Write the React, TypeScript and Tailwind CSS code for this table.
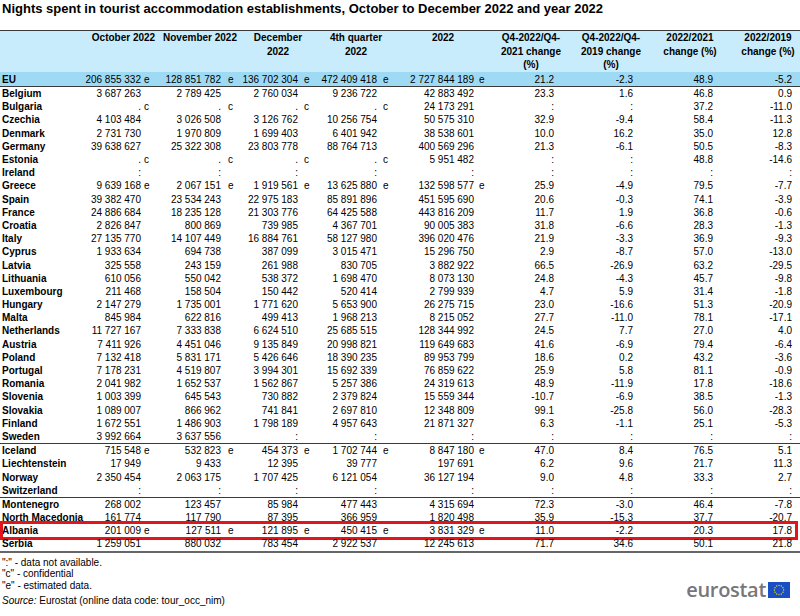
import React from 'react';

type RowData = { name: string; values: string[] };

const GRID =
  'grid grid-cols-[85px_56px_21px_59px_17px_60px_20px_59px_17px_80px_18px_62px_16px_63px_19px_61px_23px_56px_8px] items-center';

const flagPad = ['pl-[3px]', 'pl-[7px]', 'pl-[6px]', 'pl-[6px]', 'pl-[5px]', '', '', '', ''];

const headers = [
  'October 2022',
  'November 2022',
  'December 2022',
  '4th quarter 2022',
  '2022',
  'Q4-2022/Q4-2021 change (%)',
  'Q4-2022/Q4-2019 change (%)',
  '2022/2021 change (%)',
  '2022/2019 change (%)',
];

const headerWidth = [
  'w-[70px]',
  'w-[76px]',
  'w-[60px]',
  'w-[64px]',
  'w-[80px]',
  'w-[70px]',
  'w-[72px]',
  'w-[64px]',
  'w-[64px]',
];

const na = Array(9).fill(':');
const cc = ['. c', '. c', '. c', '. c'];

const eu: RowData = {
  name: 'EU',
  values: ['206 855 332 e', '128 851 782 e', '136 702 304 e', '472 409 418 e', '2 727 844 189 e', '21.2', '-2.3', '48.9', '-5.2'],
};

const members: RowData[] = [
  { name: 'Belgium', values: ['3 687 263', '2 789 425', '2 760 034', '9 236 722', '42 883 492', '23.3', '1.6', '46.8', '0.9'] },
  { name: 'Bulgaria', values: [...cc, '24 173 291', ':', ':', '37.2', '-11.0'] },
  { name: 'Czechia', values: ['4 103 484', '3 026 508', '3 126 762', '10 256 754', '50 575 310', '32.9', '-9.4', '58.4', '-11.3'] },
  { name: 'Denmark', values: ['2 731 730', '1 970 809', '1 699 403', '6 401 942', '38 538 601', '10.0', '16.2', '35.0', '12.8'] },
  { name: 'Germany', values: ['39 638 627', '25 322 308', '23 803 778', '88 764 713', '400 569 296', '21.3', '-6.1', '50.5', '-8.3'] },
  { name: 'Estonia', values: [...cc, '5 951 482', ':', ':', '48.8', '-14.6'] },
  { name: 'Ireland', values: na },
  { name: 'Greece', values: ['9 639 168 e', '2 067 151 e', '1 919 561 e', '13 625 880 e', '132 598 577 e', '25.9', '-4.9', '79.5', '-7.7'] },
  { name: 'Spain', values: ['39 382 470', '23 534 243', '22 975 183', '85 891 896', '451 595 690', '20.6', '-0.3', '74.1', '-3.9'] },
  { name: 'France', values: ['24 886 684', '18 235 128', '21 303 776', '64 425 588', '443 816 209', '11.7', '1.9', '36.8', '-0.6'] },
  { name: 'Croatia', values: ['2 826 847', '800 869', '739 985', '4 367 701', '90 005 383', '31.8', '-6.6', '28.3', '-1.3'] },
  { name: 'Italy', values: ['27 135 770', '14 107 449', '16 884 761', '58 127 980', '396 020 476', '21.9', '-3.3', '36.9', '-9.3'] },
  { name: 'Cyprus', values: ['1 933 634', '694 738', '387 099', '3 015 471', '15 296 750', '2.9', '-8.7', '57.0', '-13.0'] },
  { name: 'Latvia', values: ['325 558', '243 159', '261 988', '830 705', '3 882 922', '66.5', '-26.9', '63.2', '-29.5'] },
  { name: 'Lithuania', values: ['610 056', '550 042', '538 372', '1 698 470', '8 073 130', '24.8', '-4.3', '45.7', '-9.8'] },
  { name: 'Luxembourg', values: ['211 468', '158 504', '150 442', '520 414', '2 799 939', '4.7', '5.9', '31.4', '-1.8'] },
  { name: 'Hungary', values: ['2 147 279', '1 735 001', '1 771 620', '5 653 900', '26 275 715', '23.0', '-16.6', '51.3', '-20.9'] },
  { name: 'Malta', values: ['845 984', '622 816', '499 413', '1 968 213', '8 215 052', '27.7', '-11.0', '78.1', '-17.1'] },
  { name: 'Netherlands', values: ['11 727 167', '7 333 838', '6 624 510', '25 685 515', '128 344 992', '24.5', '7.7', '27.0', '4.0'] },
  { name: 'Austria', values: ['7 411 926', '4 451 046', '9 135 849', '20 998 821', '119 649 683', '41.6', '-6.9', '79.4', '-6.4'] },
  { name: 'Poland', values: ['7 132 418', '5 831 171', '5 426 646', '18 390 235', '89 953 799', '18.6', '0.2', '43.2', '-3.6'] },
  { name: 'Portugal', values: ['7 178 231', '4 519 807', '3 994 301', '15 692 339', '76 859 622', '25.9', '5.8', '81.1', '-0.9'] },
  { name: 'Romania', values: ['2 041 982', '1 652 537', '1 562 867', '5 257 386', '24 319 613', '48.9', '-11.9', '17.8', '-18.6'] },
  { name: 'Slovenia', values: ['1 003 399', '645 543', '730 882', '2 379 824', '15 559 344', '-10.7', '-6.9', '38.5', '-1.3'] },
  { name: 'Slovakia', values: ['1 089 007', '866 962', '741 841', '2 697 810', '12 348 809', '99.1', '-25.8', '56.0', '-28.3'] },
  { name: 'Finland', values: ['1 672 551', '1 486 903', '1 798 189', '4 957 643', '21 871 327', '6.3', '-1.1', '25.1', '-5.3'] },
  { name: 'Sweden', values: ['3 992 664', '3 637 556', ':', ':', ':', ':', ':', ':', ':'] },
];

const efta: RowData[] = [
  { name: 'Iceland', values: ['715 548 e', '532 823 e', '454 373 e', '1 702 744 e', '8 847 180 e', '47.0', '8.4', '76.5', '5.1'] },
  { name: 'Liechtenstein', values: ['17 949', '9 433', '12 395', '39 777', '197 691', '6.2', '9.6', '21.7', '11.3'] },
  { name: 'Norway', values: ['2 350 454', '2 063 175', '1 707 425', '6 121 054', '36 127 194', '9.0', '4.8', '33.3', '2.7'] },
  { name: 'Switzerland', values: na },
];

const candidates: RowData[] = [
  { name: 'Montenegro', values: ['268 002', '123 457', '85 984', '477 443', '4 315 694', '72.3', '-3.0', '46.4', '-7.8'] },
  { name: 'North Macedonia', values: ['161 774', '117 790', '87 395', '366 959', '1 820 498', '35.9', '-15.3', '37.7', '-20.7'] },
  { name: 'Albania', values: ['201 009 e', '127 511 e', '121 895 e', '450 415 e', '3 831 329 e', '11.0', '-2.2', '20.3', '17.8'] },
  { name: 'Serbia', values: ['1 259 051', '880 032', '783 454', '2 922 537', '12 245 613', '71.7', '34.6', '50.1', '21.8'] },
];

function split(v: string): [string, string] {
  const m = v.match(/^(.*) ([ec])$/);
  return m ? [m[1], m[2]] : [v, ''];
}

function Row({ row, className = 'h-[13.2px]', highlight = false }: { row: RowData; className?: string; highlight?: boolean }) {
  return (
    <div className={`${GRID} relative leading-[13px] ${className}`}>
      <div className="pl-[2px] font-bold whitespace-nowrap">{row.name}</div>
      {row.values.map((v, i) => {
        const [num, flag] = split(v);
        return (
          <React.Fragment key={i}>
            <div className="text-right whitespace-nowrap">{num}</div>
            <div className={flagPad[i]}>{flag}</div>
          </React.Fragment>
        );
      })}
      {highlight && (
        <div className="pointer-events-none absolute left-0 right-[2px] -top-[3px] -bottom-[3px] border-[3px] border-[#e3151c]" />
      )}
    </div>
  );
}

function EuFlag() {
  const stars = Array.from({ length: 12 }, (_, i) => {
    const a = (i * Math.PI) / 6;
    return { x: 11 + 4.6 * Math.cos(a), y: 8 + 4.6 * Math.sin(a) };
  });
  return (
    <svg width="22" height="16" viewBox="0 0 22 16">
      <rect width="22" height="16" fill="#1a4fc4" />
      {stars.map((s, i) => (
        <circle key={i} cx={s.x} cy={s.y} r="0.7" fill="#f2d21a" />
      ))}
    </svg>
  );
}

export default function App() {
  return (
    <div className="w-[800px] h-[616px] overflow-hidden bg-white text-black font-['Liberation_Sans',Arial,sans-serif] text-[10px]">
      <h1 className="pl-[2px] pt-[1px] text-[13px] leading-[16px] font-bold">
        Nights spent in tourist accommodation establishments, October to December 2022 and year 2022
      </h1>

      <div className="mt-[13px]">
        <div className={`${GRID} !items-start h-[42px] border-t border-[#3a3a3a] bg-[#c8ecfb] font-bold leading-[13.5px]`}>
          <div />
          {headers.map((h, i) => (
            <div key={h} className={`col-span-2 flex justify-center ${i === 7 ? 'pr-[8px]' : ''}`}>
              <div className={`text-center ${headerWidth[i]}`}>{h}</div>
            </div>
          ))}
        </div>

        <Row row={eu} className="h-[15px] bg-[#9fdaf5] border-b border-[#3a3a3a]" />

        {members.map((r, i) => (
          <Row
            key={r.name}
            row={r}
            className={i === members.length - 1 ? 'h-[14.2px] border-b border-[#3a3a3a]' : 'h-[13.2px]'}
          />
        ))}
        {efta.map((r, i) => (
          <Row
            key={r.name}
            row={r}
            className={i === efta.length - 1 ? 'h-[14.2px] border-b border-[#3a3a3a]' : 'h-[13.2px]'}
          />
        ))}
        {candidates.map((r, i) => (
          <Row
            key={r.name}
            row={r}
            highlight={r.name === 'Albania'}
            className={i === candidates.length - 1 ? 'h-[15.2px] border-b-2 border-[#666]' : 'h-[13.2px]'}
          />
        ))}
      </div>

      <div className="flex justify-between pt-[4px] leading-[11.7px]">
        <div className="pl-[2px]">
          <p>":" - data not available.</p>
          <p>"c" - confidential</p>
          <p>"e" - estimated data.</p>
          <p className="mt-[3.5px]">
            <span className="italic">Source:</span> Eurostat (online data code: tour_occ_nim)
          </p>
        </div>
        <div className="mt-[17px] mr-[10px] flex items-center gap-[2px]">
          <span className="font-['Open_Sans',sans-serif] font-semibold text-[20px] leading-[20px] tracking-[-0.3px] text-[#777]">
            eurostat
          </span>
          <EuFlag />
        </div>
      </div>
    </div>
  );
}
